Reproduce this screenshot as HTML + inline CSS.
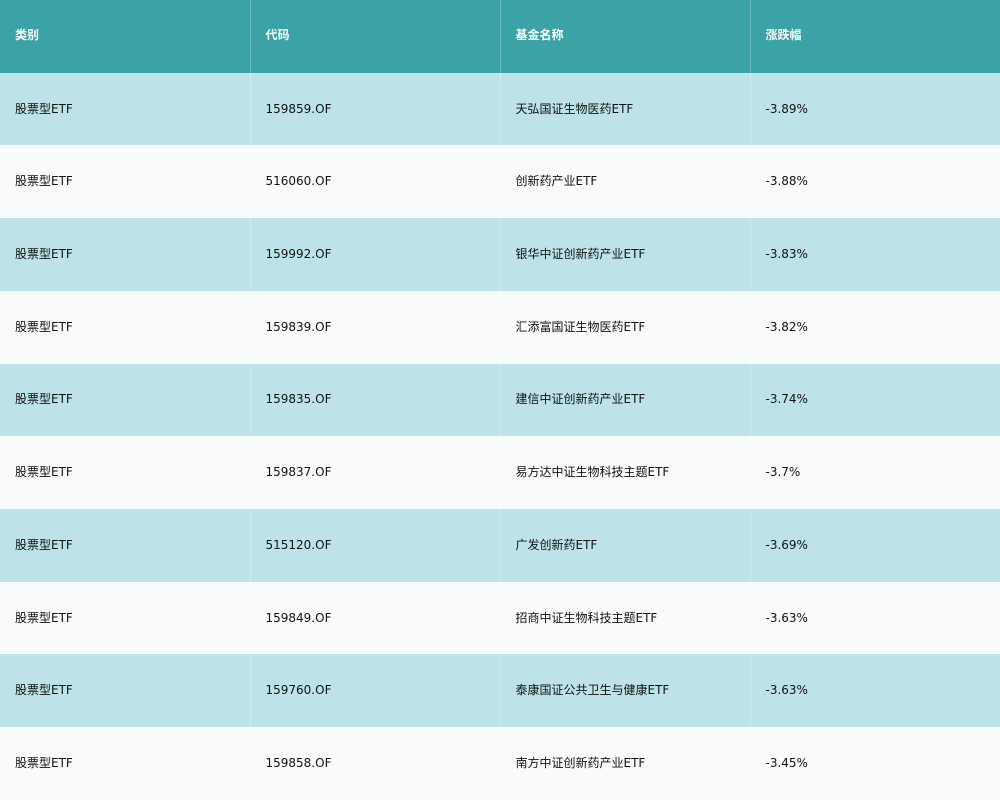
<!DOCTYPE html><html><head><meta charset="utf-8"><style>
body{margin:0;width:1000px;height:800px;overflow:hidden;font-family:"DejaVu Sans","Noto Sans CJK SC",sans-serif;font-size:12px;color:#111}
table{border-collapse:collapse;width:1000px;table-layout:fixed}
td,th{height:72.73px;padding:0 0 0 15px;text-align:left;border-left:1px solid rgba(255,255,255,.25);box-sizing:border-box;line-height:14px}
td:first-child,th:first-child{border-left:none}
th{background:#3ba3a6;color:#fff;font-weight:bold;padding-bottom:3px}
tr:nth-child(odd) td{background:#f8fafc}
tr:nth-child(even) td{background:#bde3e9}
td{padding-bottom:1px}
</style></head><body><table>
<tr><th>类别</th><th>代码</th><th>基金名称</th><th>涨跌幅</th></tr>
<tr><td>股票型ETF</td><td>159859.OF</td><td>天弘国证生物医药ETF</td><td>-3.89%</td></tr>
<tr><td>股票型ETF</td><td>516060.OF</td><td>创新药产业ETF</td><td>-3.88%</td></tr>
<tr><td>股票型ETF</td><td>159992.OF</td><td>银华中证创新药产业ETF</td><td>-3.83%</td></tr>
<tr><td>股票型ETF</td><td>159839.OF</td><td>汇添富国证生物医药ETF</td><td>-3.82%</td></tr>
<tr><td>股票型ETF</td><td>159835.OF</td><td>建信中证创新药产业ETF</td><td>-3.74%</td></tr>
<tr><td>股票型ETF</td><td>159837.OF</td><td>易方达中证生物科技主题ETF</td><td>-3.7%</td></tr>
<tr><td>股票型ETF</td><td>515120.OF</td><td>广发创新药ETF</td><td>-3.69%</td></tr>
<tr><td>股票型ETF</td><td>159849.OF</td><td>招商中证生物科技主题ETF</td><td>-3.63%</td></tr>
<tr><td>股票型ETF</td><td>159760.OF</td><td>泰康国证公共卫生与健康ETF</td><td>-3.63%</td></tr>
<tr><td>股票型ETF</td><td>159858.OF</td><td>南方中证创新药产业ETF</td><td>-3.45%</td></tr>
</table></body></html>
